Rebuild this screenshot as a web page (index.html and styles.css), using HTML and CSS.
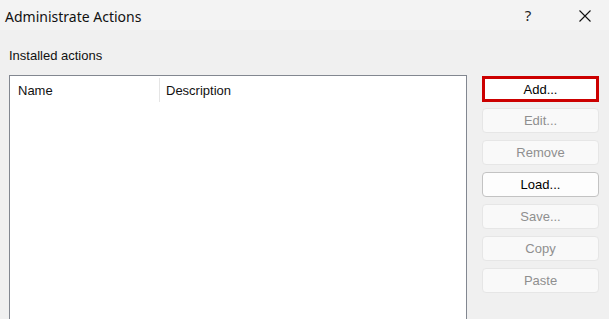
FILE: index.html
```html
<!DOCTYPE html>
<html lang="en">
<head>
  <meta charset="UTF-8" />
  <title>Administrate Actions</title>
  <link rel="stylesheet" href="styles.css">
</head>
<body>

  <div class="titlebar">
    <span class="title">Administrate Actions</span>
    <span class="title-btn help">?</span>
    <span class="title-btn close">
      <svg width="12" height="12" viewBox="0 0 12 12"><path d="M0.5 0.5 L11.5 11.5 M11.5 0.5 L0.5 11.5" stroke="#111" stroke-width="1.1" fill="none"/></svg>
    </span>
  </div>

  <div class="content">
    <div class="left">
      <div class="label">Installed actions</div>
      <div class="listbox">
        <div class="list-header">
          <div class="col col-name">Name</div>
          <div class="col col-desc">Description</div>
        </div>
      </div>
    </div>

    <div class="buttons">
      <button class="btn btn-focus">Add...</button>
      <button class="btn" disabled>Edit...</button>
      <button class="btn" disabled>Remove</button>
      <button class="btn btn-active">Load...</button>
      <button class="btn" disabled>Save...</button>
      <button class="btn" disabled>Copy</button>
      <button class="btn" disabled>Paste</button>
    </div>
  </div>

</body>
</html>
```

FILE: styles.css
```css
body {
  margin: 0;
  padding: 0;
  height: 319px;
  overflow: hidden;
  background: #f0f0f0;
  font-family: "Liberation Sans", Arial, sans-serif;
  font-size: 13px;
  color: #000;
}

.titlebar {
  display: flex;
  align-items: center;
  height: 30px;
  background: #f3f3f3;
  padding-left: 5px;
}

.title {
  flex: 1;
  font-family: "Noto Sans", "Open Sans", sans-serif;
  font-size: 14px;
  color: #111;
  margin-top: 2px;
}

.title-btn {
  display: flex;
  align-items: center;
  justify-content: center;
}

.help {
  font-family: "Noto Sans", sans-serif;
  font-size: 15px;
  width: 20px;
  margin-right: 41px;
  color: #222;
}

.close {
  width: 12px;
  margin-right: 18px;
  margin-top: 1px;
}

.content {
  display: flex;
  padding-left: 9px;
}

.left {
  width: 458px;
}

.label {
  margin-top: 18px;
  line-height: 16px;
  color: #111;
}

.listbox {
  margin-top: 11px;
  height: 244px;
  background: #fff;
  border: 1px solid #828790;
  border-bottom: none;
  box-sizing: border-box;
}

.list-header {
  display: flex;
  height: 24px;
  margin-top: 2px;
}

.col {
  display: flex;
  align-items: center;
  color: #111;
}

.col-name {
  width: 150px;
  padding-left: 8px;
  box-sizing: border-box;
  border-right: 1px solid #e5e5e5;
}

.col-desc {
  padding-left: 6px;
}

.buttons {
  display: flex;
  flex-direction: column;
  margin-left: 15px;
  padding-top: 46px;
}

.btn {
  width: 117px;
  height: 25px;
  margin-bottom: 7px;
  font-family: "Liberation Sans", Arial, sans-serif;
  font-size: 13px;
  background: #f9f9f9;
  border: 1px solid #e6e6e6;
  border-radius: 4px;
  color: #8f8f8f;
  padding: 0;
}

.btn-active {
  background: #fdfdfd;
  border: 1px solid #c3c3c3;
  color: #000;
}

.btn-focus {
  height: 26px;
  margin-bottom: 6px;
  background: #fff;
  border: 3px solid #cc0000;
  border-radius: 0;
  color: #000;
}
```
